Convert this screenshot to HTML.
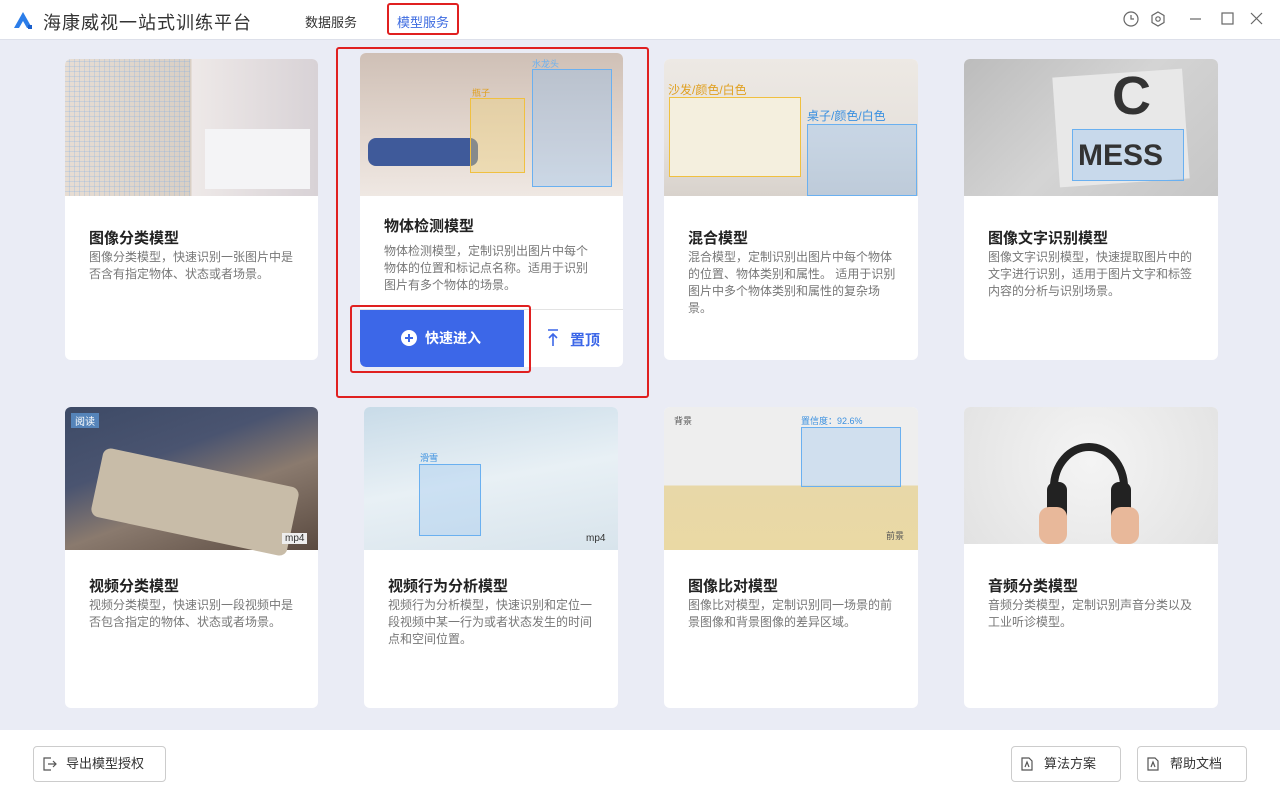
<!DOCTYPE html><html><head><meta charset="utf-8"><style>
*{margin:0;padding:0;box-sizing:border-box}
body{width:1280px;height:800px;background:#eaecf5;font-family:"Liberation Sans","Noto Sans CJK SC",sans-serif;position:relative;overflow:hidden}
.hdr{position:absolute;left:0;top:0;width:1280px;height:40px;background:#fff;border-bottom:1px solid #dde0ea}
.card{position:absolute;background:#fff;border-radius:6px;overflow:hidden}
.img{position:absolute;left:0;top:0;width:100%}
.t{position:absolute;left:24px;font-size:15px;font-weight:bold;color:#222}
.d{position:absolute;left:24px;right:22px;font-size:12px;line-height:17px;color:#777}
.foot{position:absolute;left:0;top:730px;width:1280px;height:70px;background:#fff}
.btn{position:absolute;top:746px;height:36px;border:1px solid #ccc;border-radius:4px;font-size:13px;color:#333;line-height:34px;background:#fff}
.lab{position:absolute;font-size:9px}
</style></head><body>
<div class="hdr">
<svg style="position:absolute;left:12px;top:10px" width="22" height="20"><path d="M2 18 L11 2 L20 18 Z" fill="#2b7de9"/><path d="M7 18 L11 11 L15 18Z" fill="#fff"/><rect x="16" y="15" width="4" height="4" fill="#1a5fcc"/></svg>
<div style="position:absolute;left:43px;top:9px;font-size:18px;color:#333;letter-spacing:1px">海康威视一站式训练平台</div>
<div style="position:absolute;left:305px;top:12px;font-size:13px;color:#333">数据服务</div>
<div style="position:absolute;left:387px;top:3px;width:72px;height:32px;border:2px solid #e02020;border-radius:3px"></div>
<div style="position:absolute;left:397px;top:12px;font-size:13px;color:#3d6be0">模型服务</div>
<svg style="position:absolute;left:1120px;top:10px" width="150" height="20" fill="none" stroke="#666" stroke-width="1.2"><circle cx="11" cy="9" r="7"/><path d="M11 5v4h3"/><path d="M38 2l6 3.5v7L38 16l-6-3.5v-7z"/><circle cx="38" cy="9" r="2.2"/><path d="M70 9h11"/><rect x="102" y="3" width="11" height="11"/><path d="M131 3l11 11M142 3l-11 11"/></svg>
</div>

<!-- row1 -->
<div class="card" style="left:65px;top:59px;width:253px;height:301px">
<div class="img" style="height:137px;background:linear-gradient(90deg,#e7ddd3 0,#d9cfc4 50%,#eee9e8 50%,#d8d2d6 100%)"></div>
<div style="position:absolute;left:0;top:0;width:125px;height:137px;background:repeating-linear-gradient(0deg,transparent 0 4px,rgba(120,170,230,.25) 4px 5px),repeating-linear-gradient(90deg,transparent 0 4px,rgba(120,170,230,.25) 4px 5px)"></div>
<div style="position:absolute;left:140px;top:70px;width:105px;height:60px;background:#f4f4f6"></div>
<div class="t" style="top:168px">图像分类模型</div>
<div class="d" style="top:190px">图像分类模型，快速识别一张图片中是否含有指定物体、状态或者场景。</div></div>

<div style="position:absolute;left:336px;top:47px;width:313px;height:351px;border:2px solid #e02020;border-radius:3px"></div>
<div class="card" style="left:360px;top:53px;width:263px;height:314px">
<div class="img" style="height:143px;background:linear-gradient(180deg,#cfc0b6 0,#e4d8d0 60%,#efe8e3 100%)"></div>
<div style="position:absolute;left:8px;top:85px;width:110px;height:28px;background:#3f5a9a;border-radius:8px"></div>
<div style="position:absolute;left:110px;top:45px;width:55px;height:75px;border:1px solid #f0c040;background:rgba(240,210,120,.4)"></div>
<div style="position:absolute;left:172px;top:16px;width:80px;height:118px;border:1px solid #6ab0f0;background:rgba(140,190,240,.35)"></div>
<div class="lab" style="left:172px;top:4px;color:#6ab0f0">水龙头</div><div class="lab" style="left:112px;top:33px;color:#e0a020">瓶子</div>
<div class="t" style="top:162px">物体检测模型</div>
<div class="d" style="top:190px;right:32px">物体检测模型，定制识别出图片中每个物体的位置和标记点名称。适用于识别图片有多个物体的场景。</div>
<div style="position:absolute;left:0;top:256px;width:263px;border-top:1px solid #e3e3e3"></div>
<div style="position:absolute;left:0;top:257px;width:164px;height:57px;background:#3c67e8;border-radius:0 0 0 6px;color:#fff;font-size:14px;font-weight:bold;line-height:57px;padding-left:65px">快速进入</div>
<svg style="position:absolute;left:41px;top:277px" width="16" height="16"><circle cx="8" cy="8" r="8" fill="#fff"/><path d="M8 4v8M4 8h8" stroke="#3c67e8" stroke-width="2"/></svg>
<svg style="position:absolute;left:186px;top:276px" width="14" height="18" stroke="#3c67e8" stroke-width="1.6" fill="none"><path d="M2 1h10M7 17V5M3 9l4-4 4 4"/></svg>
<div style="position:absolute;left:210px;top:276px;font-size:15px;font-weight:bold;color:#3c67e8">置顶</div>
</div>
<div style="position:absolute;left:350px;top:305px;width:181px;height:68px;border:2px solid #e02020;border-radius:3px"></div>

<div class="card" style="left:664px;top:59px;width:254px;height:301px">
<div class="img" style="height:137px;background:linear-gradient(180deg,#ede9e4,#e6e1dc 60%,#d8d2cc)"></div>
<div style="position:absolute;left:5px;top:38px;width:132px;height:80px;background:#f4efde;border:1px solid #f0c040"></div>
<div style="position:absolute;left:143px;top:65px;width:110px;height:72px;border:1px solid #6ab0f0;background:rgba(140,190,240,.35)"></div>
<div class="lab" style="left:4px;top:22px;color:#e0a020;font-size:12px">沙发/颜色/白色</div>
<div class="lab" style="left:143px;top:48px;color:#3a90e0;font-size:12px">桌子/颜色/白色</div>
<div class="t" style="top:168px">混合模型</div>
<div class="d" style="top:190px">混合模型，定制识别出图片中每个物体的位置、物体类别和属性。 适用于识别图片中多个物体类别和属性的复杂场景。</div></div>

<div class="card" style="left:964px;top:59px;width:254px;height:301px">
<div class="img" style="height:137px;background:linear-gradient(135deg,#bcbcbc,#d4d4d4 50%,#c6c6c6)"></div>
<div style="position:absolute;left:92px;top:14px;width:130px;height:110px;background:#e8e8e8;transform:rotate(-4deg)"></div>
<div style="position:absolute;left:148px;top:6px;font-size:54px;font-weight:bold;color:#333">C</div>
<div style="position:absolute;left:108px;top:70px;width:112px;height:52px;border:1px solid #6ab0f0;background:rgba(140,190,240,.35)"></div>
<div style="position:absolute;left:114px;top:80px;font-size:30px;font-weight:bold;color:#333">MESS</div>
<div class="t" style="top:168px">图像文字识别模型</div>
<div class="d" style="top:190px">图像文字识别模型，快速提取图片中的文字进行识别，适用于图片文字和标签内容的分析与识别场景。</div></div>

<!-- row2 -->
<div class="card" style="left:65px;top:407px;width:253px;height:301px">
<div class="img" style="height:143px;background:linear-gradient(160deg,#3d4a66 0,#4a5470 35%,#8a7a6e 60%,#5a4a40 100%)"></div>
<div style="position:absolute;left:30px;top:60px;width:200px;height:70px;background:#c8bca8;transform:rotate(12deg);border-radius:8px"></div>
<div class="lab" style="left:6px;top:6px;color:#fff;background:rgba(100,170,240,.6);padding:0 4px;font-size:10px">阅读</div>
<div class="lab" style="left:217px;top:126px;color:#333;background:#eee;padding:0 3px;font-size:10px">mp4</div>
<div class="t" style="top:168px">视频分类模型</div>
<div class="d" style="top:190px">视频分类模型，快速识别一段视频中是否包含指定的物体、状态或者场景。</div></div>

<div class="card" style="left:364px;top:407px;width:254px;height:301px">
<div class="img" style="height:143px;background:linear-gradient(170deg,#c8dbe8,#e8f0f5 50%,#d8e4ec)"></div>
<div style="position:absolute;left:55px;top:57px;width:62px;height:72px;border:1px solid #6ab0f0;background:rgba(140,190,240,.3)"></div>
<div class="lab" style="left:56px;top:44px;color:#3a90e0">滑雪</div>
<div class="lab" style="left:222px;top:126px;color:#333;font-size:10px">mp4</div>
<div class="t" style="top:168px">视频行为分析模型</div>
<div class="d" style="top:190px">视频行为分析模型，快速识别和定位一段视频中某一行为或者状态发生的时间点和空间位置。</div></div>

<div class="card" style="left:664px;top:407px;width:254px;height:301px">
<div class="img" style="height:143px;background:linear-gradient(180deg,#eeeeee 0,#eeeeee 55%,#e8d8a8 55%,#ead9a4 100%)"></div>
<div style="position:absolute;left:137px;top:20px;width:100px;height:60px;border:1px solid #6ab0f0;background:rgba(140,190,240,.3)"></div>
<div class="lab" style="left:137px;top:7px;color:#3a90e0">置信度：92.6%</div>
<div class="lab" style="left:10px;top:7px;color:#555">背景</div><div class="lab" style="left:222px;top:122px;color:#555">前景</div>
<div class="t" style="top:168px">图像比对模型</div>
<div class="d" style="top:190px">图像比对模型，定制识别同一场景的前景图像和背景图像的差异区域。</div></div>

<div class="card" style="left:964px;top:407px;width:254px;height:301px">
<div class="img" style="height:137px;background:radial-gradient(circle at 50% 40%,#f4f4f4,#e2e2e2)"></div>
<svg style="position:absolute;left:75px;top:10px" width="100" height="127"><path d="M15 70 A35 40 0 0 1 85 70" stroke="#222" stroke-width="8" fill="none"/><rect x="8" y="65" width="20" height="40" rx="8" fill="#222"/><rect x="72" y="65" width="20" height="40" rx="8" fill="#222"/><rect x="0" y="90" width="28" height="37" rx="10" fill="#e8b89a"/><rect x="72" y="90" width="28" height="37" rx="10" fill="#e8b89a"/></svg>
<div class="t" style="top:168px">音频分类模型</div>
<div class="d" style="top:190px">音频分类模型，定制识别声音分类以及工业听诊模型。</div></div>

<div class="foot"></div>
<div class="btn" style="left:33px;width:133px;padding-left:32px">导出模型授权</div>
<svg style="position:absolute;left:43px;top:757px" width="14" height="14" fill="none" stroke="#555" stroke-width="1.2"><path d="M8 1H1v12h7M5 7h8M10 4l3 3-3 3"/></svg>
<div class="btn" style="left:1011px;width:110px;padding-left:32px">算法方案</div>
<div class="btn" style="left:1137px;width:110px;padding-left:32px">帮助文档</div>
<svg style="position:absolute;left:1021px;top:757px" width="12" height="14" fill="none" stroke="#555" stroke-width="1.2"><path d="M1 1h7l3 3v9H1z"/><path d="M4 10l2-5 2 5"/></svg>
<svg style="position:absolute;left:1147px;top:757px" width="12" height="14" fill="none" stroke="#555" stroke-width="1.2"><path d="M1 1h7l3 3v9H1z"/><path d="M4 10l2-5 2 5"/></svg>
</body></html>
